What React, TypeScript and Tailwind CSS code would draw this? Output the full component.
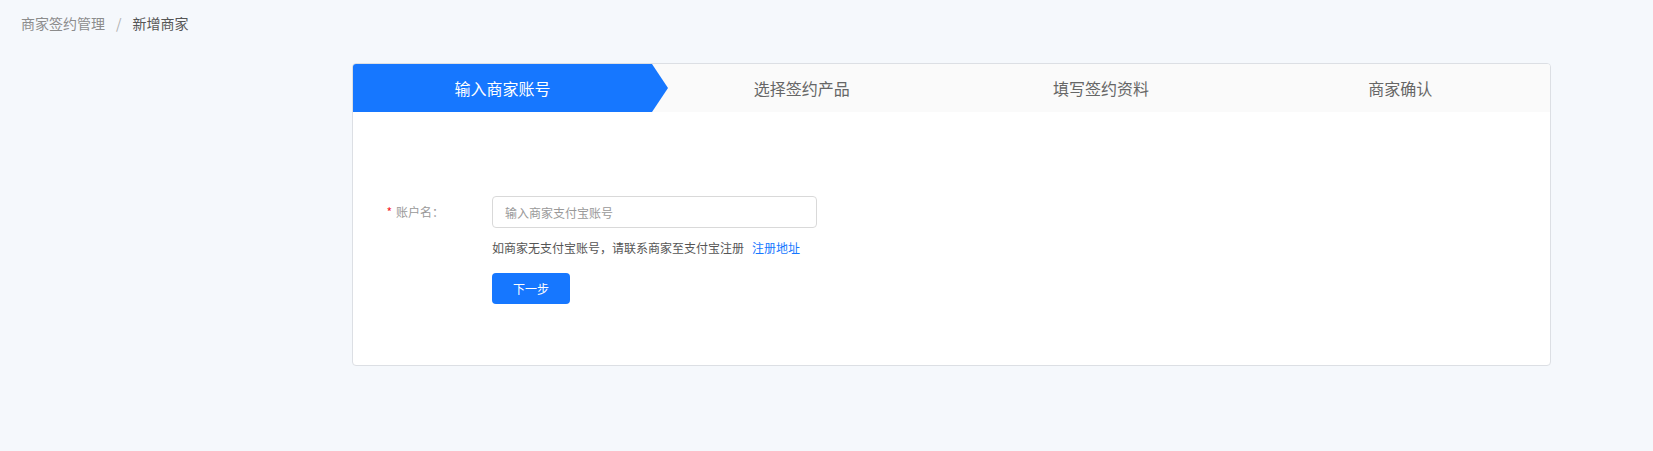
const steps = ['输入商家账号', '选择签约产品', '填写签约资料', '商家确认']

export default function App() {
  return (
    <div
      className="min-h-[451px] w-full bg-[#f5f8fc] text-[#555]"
      style={{ fontFamily: '"Noto Sans CJK SC", "Noto Sans", sans-serif' }}
    >
      <div className="flex items-center pl-[21px] pt-[13px] text-[14px] leading-[20px]">
        <span className="text-[#8c8c8c]">商家签约管理</span>
        <span className="mx-[11px] text-[#b0b0b0]">/</span>
        <span className="text-[#555]">新增商家</span>
      </div>

      <div className="ml-[352px] mt-[30px] w-[1199px] overflow-hidden rounded-[4px] border border-[#dcdfe4] bg-white">
        <div className="grid h-[48px] grid-cols-4 bg-[#fafafa]">
          {steps.map((step, i) => (
            <div
              key={step}
              className={`relative flex items-center justify-center text-[16px] ${
                i === 0 ? 'bg-[#1677ff] text-white' : 'text-[#666]'
              }`}
            >
              {step}
              {i === 0 && (
                <svg
                  className="absolute right-[-16px] top-0 z-10"
                  width="16"
                  height="48"
                  viewBox="0 0 16 48"
                >
                  <polygon points="0,0 16,24 0,48" fill="#1677ff" />
                </svg>
              )}
            </div>
          ))}
        </div>

        <div className="pb-[61px] pt-[84px] text-[12px]">
          <div className="flex items-center">
            <div className="flex w-[139px] items-center justify-end pr-[48px] text-[#999]">
              <span className="mr-[4px] text-[#f5222d]">*</span>
              <span>账户名：</span>
            </div>
            <input
              className="h-[32px] w-[325px] rounded-[4px] border border-[#d9d9d9] px-[12px] text-[12px] text-[#333] outline-none placeholder:text-[#999]"
              placeholder="输入商家支付宝账号"
            />
          </div>
          <div className="ml-[139px] mt-[10px] leading-[20px] text-[#555]">
            如商家无支付宝账号，请联系商家至支付宝注册
            <a className="ml-[8px] text-[#1677ff]" href="#">
              注册地址
            </a>
          </div>
          <div className="ml-[139px] mt-[15px]">
            <button className="h-[31px] w-[78px] rounded-[4px] bg-[#1677ff] text-[12px] text-white">
              下一步
            </button>
          </div>
        </div>
      </div>
    </div>
  )
}
